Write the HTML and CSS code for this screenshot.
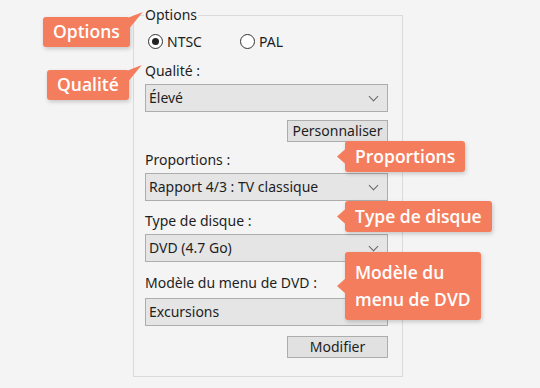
FILE: index.html
```html
<!DOCTYPE html>
<html lang="fr">
<head>
  <meta charset="UTF-8" />
  <title>Options DVD</title>
  <link rel="stylesheet" href="styles.css">
</head>
<body>
  <div class="stage">
    <fieldset class="panel">
      <legend>Options</legend>
      <div class="radios">
        <label class="radio checked"><span class="dot"></span>NTSC</label>
        <label class="radio"><span class="dot"></span>PAL</label>
      </div>

      <div class="field-label first">Qualité :</div>
      <div class="select">Élevé<span class="chev"></span></div>
      <div class="btn-row"><button class="btn">Personnaliser</button></div>

      <div class="field-label after-btn">Proportions :</div>
      <div class="select">Rapport 4/3 : TV classique<span class="chev"></span></div>

      <div class="field-label">Type de disque :</div>
      <div class="select">DVD (4.7 Go)<span class="chev"></span></div>

      <div class="field-label last">Modèle du menu de DVD :</div>
      <div class="select">Excursions</div>
      <div class="btn-row bottom"><button class="btn">Modifier</button></div>
    </fieldset>

    <div class="callout tail-up c-options">Options</div>
    <div class="callout tail-up c-quality">Qualité</div>
    <div class="callout tail-left c-ratio">Proportions</div>
    <div class="callout tail-left c-disc">Type de disque</div>
    <div class="callout tail-left c-menu">Modèle du<br>menu de DVD</div>
  </div>
</body>
</html>
```

FILE: styles.css
```css
body {
  margin: 0;
  background-color: #f4f4f4;
  font-family: 'Noto Sans', 'Open Sans', sans-serif;
}
.stage {
  position: relative;
  width: 540px;
  height: 388px;
  overflow: hidden;
}
.panel {
  margin: 0 0 0 133px;
  width: 270px;
  height: 370px;
  box-sizing: border-box;
  border: 1px solid #dadada;
  padding: 0 14px 0 11px;
  position: relative;
  top: 7px;
  font-size: 14px;
  color: #1e1e1e;
}
.panel legend {
  padding: 0 1px;
  margin-left: -1px;
  line-height: 16px;
}
.radios {
  display: flex;
  margin-top: 9px;
  height: 18px;
  align-items: center;
}
.radio {
  display: flex;
  align-items: center;
  gap: 4px;
  width: 89px;
  padding-left: 3px;
}
.dot {
  width: 13px;
  height: 13px;
  border: 1px solid #333;
  border-radius: 50%;
  background: #fff;
  display: flex;
  align-items: center;
  justify-content: center;
}
.radio.checked .dot::after {
  content: '';
  width: 7px;
  height: 7px;
  border-radius: 50%;
  background: #222;
}
.field-label {
  line-height: 16px;
  margin-top: 12px;
  margin-bottom: 5px;
}
.field-label.first {
  margin-top: 13px;
}
.field-label.after-btn {
  margin-top: 10px;
}
.field-label.last {
  margin-top: 13px;
  margin-bottom: 7px;
}
.select {
  position: relative;
  height: 28px;
  box-sizing: border-box;
  border: 1px solid #adadad;
  background: #e5e5e5;
  line-height: 26px;
  padding-left: 3px;
}
.chev {
  position: absolute;
  right: 10px;
  top: 8px;
  width: 6px;
  height: 6px;
  border-right: 1px solid #666;
  border-bottom: 1px solid #666;
  transform: rotate(45deg);
}
.btn-row {
  display: flex;
  justify-content: flex-end;
  margin-top: 8px;
}
.btn-row.bottom {
  margin-top: 10px;
}
.btn {
  font-family: inherit;
  font-size: 14px;
  color: #1e1e1e;
  width: 101px;
  height: 22px;
  padding: 0;
  border: 1px solid #adadad;
  background: #e1e1e1;
  line-height: 20px;
}
.callout {
  position: absolute;
  background: #f47d5d;
  color: #fff;
  font-family: 'Open Sans', 'Noto Sans', sans-serif;
  font-weight: 600;
  font-size: 17.5px;
  line-height: 23px;
  padding: 3px 10px 4px;
  border-radius: 3px;
  box-shadow: 1px 2px 4px rgba(0,0,0,0.18);
}
.callout::after {
  content: '';
  position: absolute;
  background: #f47d5d;
}
.tail-up::after {
  right: -13px;
  top: -5px;
  width: 23px;
  height: 17px;
  clip-path: polygon(100% 0, 0 9px, 9px 100%);
}
.tail-left::after {
  left: -8px;
  top: 50%;
  margin-top: -8px;
  width: 9px;
  height: 16px;
  clip-path: polygon(0 50%, 100% 0, 100% 100%);
}
.c-options { left: 43px; top: 17px; }
.c-quality { left: 47px; top: 70px; }
.c-ratio { left: 345px; top: 141px; padding: 4px 10px; }
.c-disc { left: 345px; top: 201px; padding: 4px 10px; }
.c-menu { left: 345px; top: 252px; line-height: 27px; padding: 7px 10px; }
```
